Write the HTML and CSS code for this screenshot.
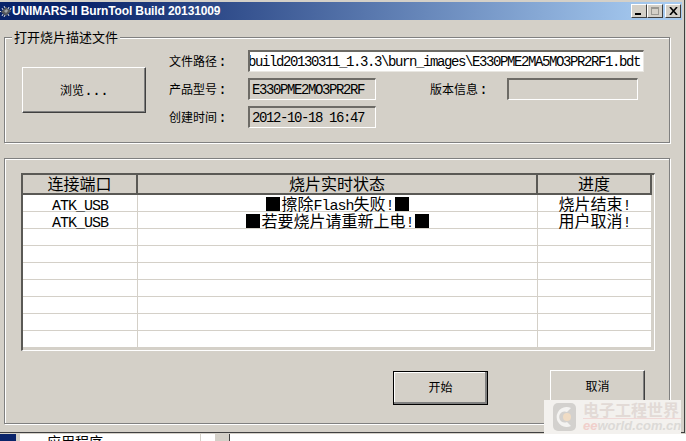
FILE: index.html
```html
<!DOCTYPE html>
<html lang="zh-CN">
  <head>
    <meta charset="UTF-8" />
    <title>UNIMARS-II BurnTool Build 20131009</title>
    <link rel="stylesheet" href="styles.css">
  </head>
  <body>
    <div class="window">
      <div class="titlebar">
        <svg class="app-icon" width="12" height="12" viewBox="0 0 12 12">
          <path d="M1 7 L6 2 L11 6 L6 11 Z" fill="#55585c" />
          <path d="M1 7 L0 6 M3 5 L2 3 M5 3 L4 1 M8 4 L9 2 M10 5 L11 3 M3 9 L2 11 M5 10 L4 12 M8 9 L9 11" stroke="#d8d8d8" stroke-width="1" />
          <path d="M4 6 L7 4 L8 6 L6 8 Z" fill="#a0a4a8" />
        </svg>
        <span class="title-text">UNIMARS-II BurnTool Build 20131009</span>
        <div class="caption-buttons">
          <button class="caption-btn"><span class="glyph-min"></span></button>
          <button class="caption-btn"><span class="glyph-max"></span></button>
          <button class="caption-btn close-btn">
            <svg width="9" height="8" viewBox="0 0 9 8"><path d="M1 0 L8 8 M8 0 L1 8" stroke="#000" stroke-width="1.6" /></svg>
          </button>
        </div>
      </div>

      <fieldset class="group group-file">
        <legend>打开烧片描述文件</legend>
        <div class="file-row">
          <button class="win-btn browse-btn">浏览<span class="lat">...</span></button>
          <div class="file-fields">
            <label class="field-label">文件路径<span class="lat">:</span></label>
            <div class="field field-path"><span class="lat-field">build20130311_1.3.3\burn_images\E330PME2MA5MO3PR2RF1.bdt</span></div>

            <label class="field-label">产品型号<span class="lat">:</span></label>
            <div class="field field-ro"><span class="lat-field">E330PME2MO3PR2RF</span></div>
            <label class="field-label version-label">版本信息<span class="lat">:</span></label>
            <div class="field field-ro field-version"></div>

            <label class="field-label">创建时间<span class="lat">:</span></label>
            <div class="field field-ro"><span class="lat-field">2012-10-18 16:47</span></div>
          </div>
        </div>
      </fieldset>

      <fieldset class="group group-status">
        <div class="table-wrap">
          <table class="status-table">
            <colgroup>
              <col class="col-port" />
              <col class="col-state" />
              <col class="col-progress" />
            </colgroup>
            <thead>
              <tr>
                <th>连接端口</th>
                <th>烧片实时状态</th>
                <th>进度</th>
              </tr>
            </thead>
            <tbody>
              <tr>
                <td><div class="cell"><span class="lat">ATK_USB</span></div></td>
                <td><div class="cell"><i class="blk"></i>擦除<span class="lat">Flash</span>失败<span class="lat">!</span><i class="blk"></i></div></td>
                <td><div class="cell">烧片结束<span class="lat">!</span></div></td>
              </tr>
              <tr>
                <td><div class="cell"><span class="lat">ATK_USB</span></div></td>
                <td><div class="cell"><i class="blk"></i>若要烧片请重新上电<span class="lat">!</span><i class="blk"></i></div></td>
                <td><div class="cell">用户取消<span class="lat">!</span></div></td>
              </tr>
              <tr><td></td><td></td><td></td></tr>
              <tr><td></td><td></td><td></td></tr>
              <tr><td></td><td></td><td></td></tr>
              <tr><td></td><td></td><td></td></tr>
              <tr><td></td><td></td><td></td></tr>
              <tr><td></td><td></td><td></td></tr>
              <tr><td></td><td></td><td></td></tr>
            </tbody>
          </table>
        </div>
        <div class="actions">
          <button class="win-btn start-btn">开始</button>
          <button class="win-btn cancel-btn">取消</button>
        </div>
      </fieldset>
    </div>

    <div class="behind">
      <div class="behind-blue"></div>
      <div class="behind-gap"></div>
      <div class="behind-list">应用程序</div>
      <div class="behind-gap2"></div>
      <div class="behind-scroll"></div>
      <div class="behind-white"></div>
    </div>

    <!-- watermark sits over the window corner -->
    <div class="watermark">
      <svg class="wm-logo" width="23" height="28" viewBox="0 0 23 28">
        <rect x="0" y="0" width="23" height="28" rx="5" fill="#d3d1ce" />
        <path d="M18 5 A10 10 0 1 0 18 23 L14 19 A5.5 5.5 0 1 1 14 9 Z" fill="#f4f3f1" />
        <circle cx="14" cy="14" r="4" fill="#f0dcc4" />
      </svg>
      <div class="wm-text">
        <div class="wm-cn">电子工程世界</div>
        <div class="wm-en"><span class="wm-ee">ee</span>world.com.cn</div>
      </div>
    </div>
  </body>
</html>
```

FILE: styles.css
```css
body {
  margin: 0;
  width: 686px;
  height: 441px;
  overflow: hidden;
  position: relative;
  background-color: #d4d0c8;
  font-family: "Noto Sans CJK SC", "Liberation Sans", sans-serif;
  color: #000;
}

.window {
  height: 433px;
  box-sizing: border-box;
  padding-top: 2px;
  border-bottom: 1px solid #404040;
  border-right: 1px solid #404040;
  width: 685px;
}

/* Title bar */
.titlebar {
  display: flex;
  align-items: center;
  height: 18px;
  margin-right: 2px;
  background: linear-gradient(to right, #0a246a 0%, #0a246a 12%, #a6caf0 96%);
}

.app-icon {
  flex: none;
}

.title-text {
  font-family: "Liberation Sans", sans-serif;
  font-weight: bold;
  font-size: 12px;
  letter-spacing: -0.12px;
  color: #fff;
  white-space: nowrap;
}

.caption-buttons {
  display: flex;
  margin-left: auto;
  margin-right: 1px;
}

.caption-btn {
  width: 16px;
  height: 14px;
  padding: 0;
  display: flex;
  align-items: center;
  justify-content: center;
  background-color: #d4d0c8;
  border: 1px solid;
  border-color: #fff #404040 #404040 #fff;
}

.close-btn {
  margin-left: 2px;
}

.glyph-min {
  width: 6px;
  height: 2px;
  background-color: #000;
  margin-top: 6px;
  margin-right: 3px;
}

.glyph-max {
  width: 8px;
  height: 8px;
  box-sizing: border-box;
  border: 1px solid #9a9892;
  border-top-width: 2px;
}

/* Group boxes */
.group {
  box-sizing: border-box;
  margin: 0 0 0 4px;
  padding: 0;
  min-width: 0;
  width: 666px;
  border: 1px solid #808080;
  box-shadow: 1px 1px 0 #fff, inset 1px 1px 0 #fff;
}

.group legend {
  margin-left: 7px;
  padding: 0 2px;
  font-size: 13px;
  line-height: 14px;
  background-color: #d4d0c8;
}

.group-file {
  margin-top: 10px;
  height: 113px;
}

.group-status {
  margin-top: 15px;
  height: 266px;
  padding: 14px 0 0 16px;
}

.file-row {
  display: flex;
  padding: 6px 0 0 17px;
}

.browse-btn {
  width: 124px;
  height: 46px;
  margin-top: 17px;
  margin-right: 23px;
  padding-bottom: 2px;
  flex: none;
}

.file-fields {
  display: grid;
  grid-template-columns: 79px 128px 54px 77px 131px 6px;
  grid-auto-rows: 22px;
  row-gap: 6px;
}

.field-label {
  grid-column: 1;
  font-size: 12px;
  line-height: 22px;
  white-space: nowrap;
}

.field-label .lat {
  margin-left: 1px;
}

.field-label.version-label {
  grid-column: 4;
}

.field {
  box-sizing: border-box;
  display: flex;
  align-items: center;
  overflow: hidden;
  white-space: nowrap;
  padding: 0 2px;
  border: 2px solid;
  border-color: #6d6b66 #fff #fff #6d6b66;
  border-right-width: 1px;
  border-bottom-width: 1px;
}

.field-path {
  grid-column: 2 / 7;
  justify-content: flex-end;
  background-color: #fff;
  padding-right: 3px;
  border-color: #6d6b66 #e9e7e2 #e9e7e2 #6d6b66;
}

.field-ro {
  grid-column: 2;
  background-color: #d4d0c8;
}

.field-ro.field-version {
  grid-column: 5;
}

.lat-field {
  flex: none;
  font-family: "Liberation Mono", monospace;
  font-size: 14px;
  letter-spacing: -1.4px;
}

.lat {
  font-family: "Liberation Mono", monospace;
  font-size: 15px;
  line-height: 1;
  letter-spacing: -1px;
}

/* Buttons */
.win-btn {
  display: block;
  padding: 0;
  background-color: #d4d0c8;
  font-family: inherit;
  font-size: 12px;
  color: #000;
  border: 1px solid;
  border-color: #fff #404040 #404040 #fff;
  box-shadow: inset -1px -1px 0 #808080;
}

/* Status table */
.table-wrap {
  box-sizing: border-box;
  width: 634px;
  height: 178px;
  border: 2px solid;
  border-color: #5a5955 #fff #fff #5a5955;
  border-right-width: 1px;
  border-bottom-width: 1px;
  background-color: #d4d0c8;
}

.status-table {
  width: 629px;
  table-layout: fixed;
  border-collapse: separate;
  border-spacing: 0;
}

.col-port { width: 115px; }
.col-state { width: 400px; }
.col-progress { width: 114px; }

.status-table th {
  box-sizing: border-box;
  height: 20px;
  padding: 0 0 1px;
  font-size: 16px;
  font-weight: normal;
  line-height: 17px;
  background-color: #d4d0c8;
  border-right: 2px solid #5a5955;
  border-bottom: 2px solid #5a5955;
}

.status-table td {
  box-sizing: border-box;
  height: 17px;
  padding: 0;
  background-color: #fff;
  border-right: 1px solid #d4d0c8;
  border-bottom: 1px solid #d4d0c8;
}

.cell {
  height: 16px;
  font-size: 16px;
  line-height: 16px;
  text-align: center;
  white-space: nowrap;
}

.blk {
  display: inline-block;
  width: 14px;
  height: 14px;
  margin: 0 1px;
  background-color: #000;
  vertical-align: -1px;
}

.actions {
  display: flex;
  align-items: flex-start;
  margin: 20px 0 0 372px;
}

.start-btn {
  width: 95px;
  height: 34px;
  margin-right: 62px;
  padding-bottom: 4px;
  border: 1px solid #000;
  box-shadow: inset -2px -2px 0 #808080, inset 1px 1px 0 #fff;
}

.cancel-btn {
  width: 95px;
  height: 36px;
  margin-top: -1px;
  padding-bottom: 6px;
}

/* Strip of whatever lies behind the window */
.behind {
  display: flex;
  height: 7px;
  overflow: hidden;
  margin-top: 1px;
}

.behind-blue {
  width: 16px;
  background-color: #0a246a;
}

.behind-gap {
  width: 3px;
}

.behind-list {
  box-sizing: border-box;
  width: 182px;
  padding-left: 27px;
  border-left: 1px solid #d4d0c8;
  border-right: 1px solid #d4d0c8;
  background-color: #fff;
  font-size: 14px;
  line-height: 14px;
}

.behind-gap2 {
  width: 14px;
  background-color: #fff;
}

.behind-scroll {
  width: 14px;
  background-color: #d4d0c8;
  border-right: 1px solid #404040;
}

.behind-white {
  flex: 1;
  background-color: #fff;
}

/* Watermark */
.watermark {
  position: absolute;
  left: 544px;
  top: 400px;
  width: 137px;
  height: 34px;
  display: flex;
  align-items: center;
  gap: 7px;
  padding-left: 9px;
  box-sizing: border-box;
  background-color: #f3f1ee;
}

.wm-logo {
  flex: none;
}

.wm-text {
  display: flex;
  flex-direction: column;
}

.wm-cn {
  font-size: 16px;
  font-weight: bold;
  line-height: 17px;
  color: #e2dad6;
  border-bottom: 1px solid #f0d8d6;
  white-space: nowrap;
}

.wm-en {
  font-family: "Liberation Sans", sans-serif;
  font-size: 13px;
  font-weight: bold;
  font-style: italic;
  line-height: 14px;
  color: #dcdad7;
  white-space: nowrap;
}

.wm-ee {
  color: #f0cfcb;
}
```
